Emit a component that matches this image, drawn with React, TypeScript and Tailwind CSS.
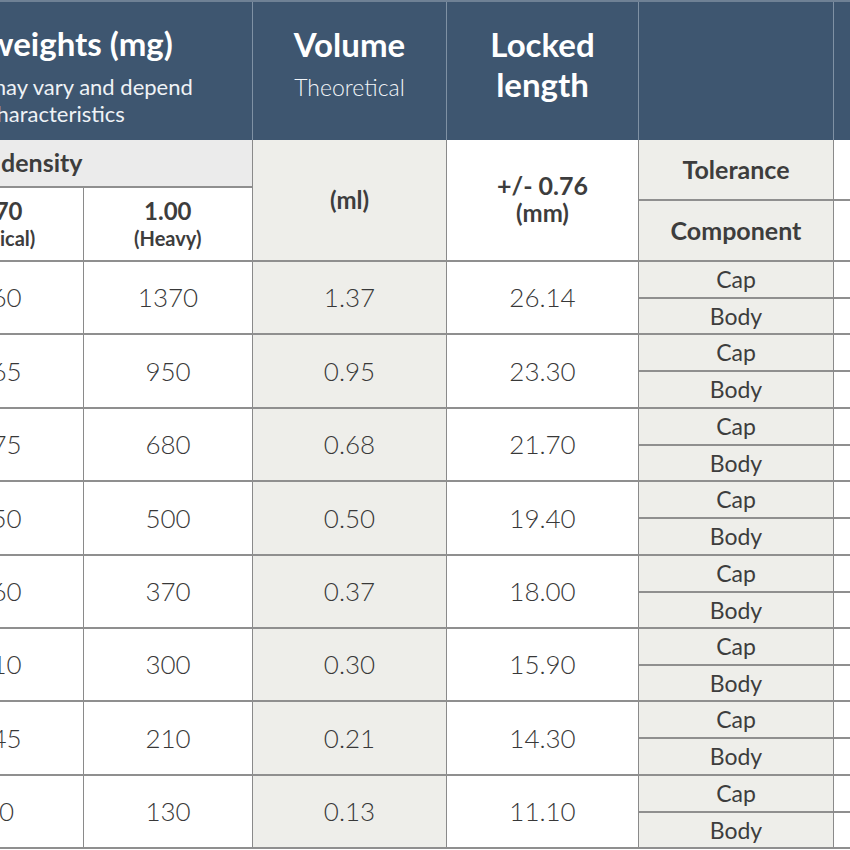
const rows = [
  { a: "960", b: "1370", c: "1.37", d: "26.14", h: "h-[73px]" },
  { a: "665", b: "950", c: "0.95", d: "23.30", h: "h-[74px]" },
  { a: "475", b: "680", c: "0.68", d: "21.70", h: "h-[73px]" },
  { a: "350", b: "500", c: "0.50", d: "19.40", h: "h-[74px]" },
  { a: "260", b: "370", c: "0.37", d: "18.00", h: "h-[73px]" },
  { a: "210", b: "300", c: "0.30", d: "15.90", h: "h-[73px]" },
  { a: "145", b: "210", c: "0.21", d: "14.30", h: "h-[74px]" },
  { a: "90", b: "130", c: "0.13", d: "11.10", h: "h-[73px]" },
];

const SplitCell = ({ gray }: { gray?: boolean }) => (
  <div className={`flex flex-col ${gray ? "w-[195px] border-r border-[#8a8a8a] bg-[#eeeeea]" : "w-[120px] bg-white"}`}>
    <div className="flex flex-1 items-center justify-center border-b-2 border-[#8f8f8f] text-[23px] text-[#3d3d3d]">
      {gray ? "Cap" : ""}
    </div>
    <div className="flex flex-1 items-center justify-center text-[23px] text-[#3d3d3d]">
      {gray ? "Body" : ""}
    </div>
  </div>
);

export default function App() {
  return (
    <div className="h-[850px] w-[850px] overflow-hidden bg-white font-['Lato',sans-serif] text-[#3d3d3d]">
      <div className="-ml-[85px] w-[1100px]">
        {/* header */}
        <div className="flex h-[140px] border-t-2 border-[#6f8195] bg-[#3e5670] text-white">
          <div className="w-[338px] border-r border-[#7f91a4] pl-[77px] pt-[22px]">
            <div className="-ml-[5px] whitespace-nowrap text-[33px] font-bold leading-[38px]">weights (mg)</div>
            <div className="mt-[11px] -ml-[4px] whitespace-nowrap text-[22px] leading-[27px] text-[#eef2f6]">may vary and depend</div>
            <div className="-ml-[6px] whitespace-nowrap text-[22px] leading-[27px] text-[#eef2f6]">characteristics</div>
          </div>
          <div className="flex w-[194px] flex-col items-center border-r border-[#7f91a4] pt-[22px]">
            <div className="text-[33px] font-bold leading-[40px]">Volume</div>
            <div className="mt-[6px] text-[23px] font-light leading-[34px] text-[#f2f5f8]">Theoretical</div>
          </div>
          <div className="flex w-[192px] flex-col items-center border-r border-[#7f91a4] pt-[22px] text-center">
            <div className="text-[33px] font-bold leading-[40px]">Locked</div>
            <div className="text-[33px] font-bold leading-[40px]">length</div>
          </div>
          <div className="w-[195px] border-r border-[#7f91a4]" />
          <div className="flex-1" />
        </div>

        {/* sub header */}
        <div className="flex h-[122px] border-b-2 border-[#8f8f8f]">
          <div className="flex w-[338px] flex-col border-r border-[#8a8a8a]">
            <div className="flex h-[48px] items-center border-b-2 border-[#8f8f8f] bg-[#ebebeb] pl-[86px] text-[25px] font-bold">
              density
            </div>
            <div className="flex flex-1">
              <div className="flex w-[169px] flex-col items-center justify-center border-r border-[#8a8a8a] font-bold">
                <div className="text-[24px] leading-[28px]">0.70</div>
                <div className="text-[20px] leading-[26px]">(Typical)</div>
              </div>
              <div className="flex w-[169px] flex-col items-center justify-center font-bold">
                <div className="text-[24px] leading-[28px]">1.00</div>
                <div className="text-[20px] leading-[26px]">(Heavy)</div>
              </div>
            </div>
          </div>
          <div className="flex w-[194px] items-center justify-center border-r border-[#8a8a8a] bg-[#eeeeea] text-[24px] font-bold">
            (ml)
          </div>
          <div className="flex w-[192px] flex-col items-center justify-center border-r border-[#8a8a8a] pb-[2px] font-bold">
            <div className="text-[25px] leading-[28px]">+/- 0.76</div>
            <div className="text-[24px] leading-[28px]">(mm)</div>
          </div>
          <div className="flex w-[195px] flex-col border-r border-[#8a8a8a] bg-[#eeeeea] text-[25px] font-bold">
            <div className="flex h-[61px] items-center justify-center border-b-2 border-[#8f8f8f]">Tolerance</div>
            <div className="flex flex-1 items-center justify-center">Component</div>
          </div>
          <div className="flex w-[120px] flex-col">
            <div className="h-[61px] border-b-2 border-[#8f8f8f]" />
          </div>
        </div>

        {/* data rows */}
        {rows.map((r) => (
          <div key={r.b} className={`flex ${r.h} border-b-2 border-[#8f8f8f]`}>
            <div className="flex w-[169px] items-center justify-center border-r border-[#8a8a8a] text-[26px] font-light text-[#383838]">
              {r.a}
            </div>
            <div className="flex w-[169px] items-center justify-center border-r border-[#8a8a8a] text-[26px] font-light text-[#383838]">
              {r.b}
            </div>
            <div className="flex w-[194px] items-center justify-center border-r border-[#8a8a8a] bg-[#eeeeea] text-[26px] font-light text-[#383838]">
              {r.c}
            </div>
            <div className="flex w-[192px] items-center justify-center border-r border-[#8a8a8a] text-[26px] font-light text-[#383838]">
              {r.d}
            </div>
            <SplitCell gray />
            <SplitCell />
          </div>
        ))}
      </div>
    </div>
  );
}
